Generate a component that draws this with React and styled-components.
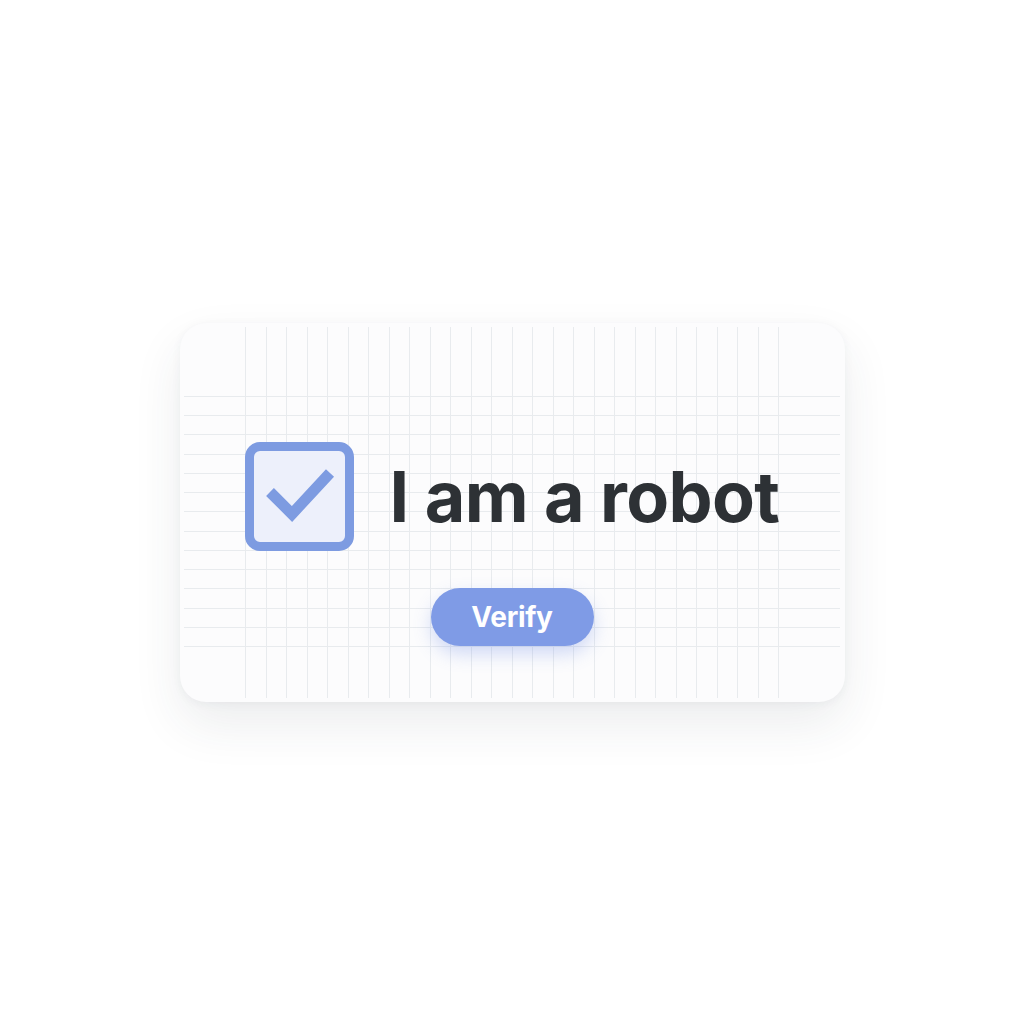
import styled, { createGlobalStyle } from "styled-components";

const GlobalStyle = createGlobalStyle`
  html, body {
    margin: 0;
    padding: 0;
    background: #ffffff;
  }
  body {
    font-family: "Liberation Sans", Arial, sans-serif;
  }
`;

function App() {
  return (
    <Page>
      <GlobalStyle />
      <Card>
        <Row>
          <CheckBox>
            <svg width="91" height="91" viewBox="0 0 91 91">
              <path d="M16 41 L38 63 L76 22" fill="none" stroke="#7d9be1" strokeWidth="11" strokeLinecap="butt" strokeLinejoin="miter" />
            </svg>
          </CheckBox>
          <Label>I am a robot</Label>
        </Row>
        <VerifyButton type="button">Verify</VerifyButton>
      </Card>
    </Page>
  );
}

export default App;

const Page = styled.div`
  height: 1024px;
  display: flex;
  align-items: center;
  justify-content: center;
`;

const Card = styled.div`
  width: 665px;
  height: 379px;
  box-sizing: border-box;
  padding-top: 119px;
  display: flex;
  flex-direction: column;
  align-items: center;
  border-radius: 26px;
  background-color: #fcfcfd;
  background-image:
    repeating-linear-gradient(to right, #e8ebee 0 1px, transparent 1px 20.5px),
    repeating-linear-gradient(to bottom, #e8ebee 0 1px, transparent 1px 19.25px);
  background-position: 65px 4px, 4px 73px;
  background-size: 535px 371px, 656px 252px;
  background-repeat: no-repeat;
  box-shadow: 0 22px 50px rgba(40, 50, 70, 0.09), 0 2px 10px rgba(40, 50, 70, 0.05);
`;

const Row = styled.div`
  display: flex;
  align-items: center;
  gap: 36px;
`;

const CheckBox = styled.div`
  width: 109px;
  height: 109px;
  box-sizing: border-box;
  border: 9px solid #7d9be1;
  border-radius: 15px;
  background: #edf0fb;
  display: flex;
  align-items: center;
  justify-content: center;
`;

const Label = styled.span`
  font-family: Inter, "Liberation Sans", Arial, sans-serif;
  font-size: 70px;
  line-height: 1;
  font-weight: 700;
  color: #2d3135;
  letter-spacing: -0.6px;
  margin-top: 2px;
`;

const VerifyButton = styled.button`
  margin-top: 37px;
  width: 163px;
  height: 58px;
  border: none;
  border-radius: 29px;
  background: #7f9be6;
  color: #ffffff;
  font-family: Inter, "Liberation Sans", Arial, sans-serif;
  font-size: 28px;
  font-weight: 700;
  letter-spacing: -0.3px;
  box-shadow: 0 8px 18px rgba(110, 140, 230, 0.3);
`;
